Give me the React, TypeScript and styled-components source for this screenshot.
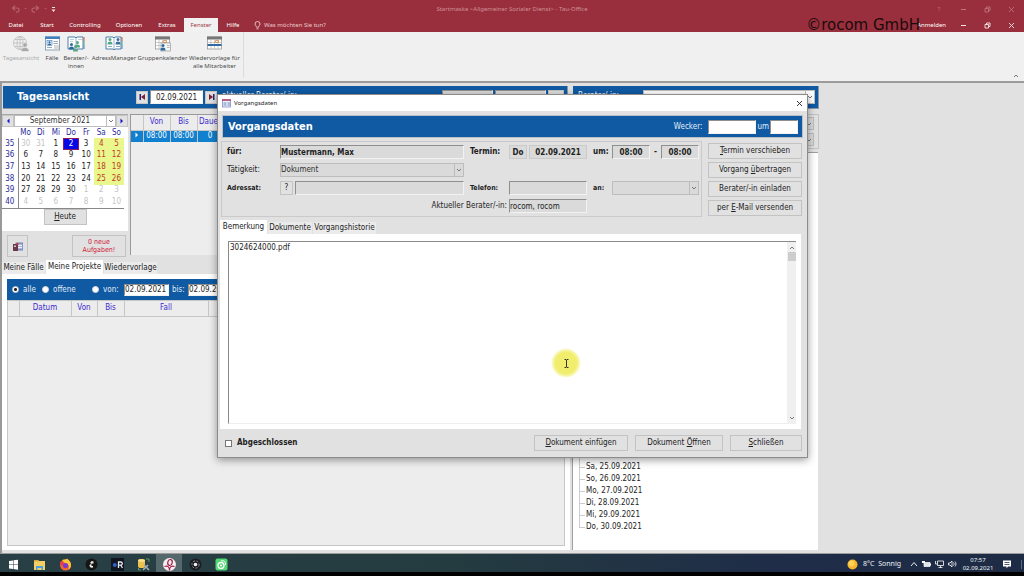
import React from "react";
import styled, { createGlobalStyle, css } from "styled-components";

const tahoma = `"DejaVu Sans Condensed", "DejaVu Sans", "Noto Sans", sans-serif`;
const segoe = `"Noto Sans", "Open Sans", sans-serif`;
const blue = "#0f5aa3";
const face = "#e1e1e1";

const GlobalStyle = createGlobalStyle`
  *, *::before, *::after { box-sizing: border-box; }
  body { margin: 0; background: #000; font-family: ${tahoma}; font-size: 8px; line-height: 10px; color: #222; }
  button, input, select, textarea { font: inherit; color: inherit; margin: 0; padding: 0; border-radius: 0; }
  u { text-underline-offset: 1px; }
`;

const Screen = styled.div`
  display: flex;
  flex-direction: column;
  min-height: 100vh;
  padding-bottom: 4px;
`;

/* ---------- title bar and ribbon ---------- */

const TopBar = styled.header`
  position: relative;
  background: #992f3c;
  font-family: ${segoe};
  font-size: 6px;
  line-height: 8px;
  color: #fff;
`;

const TitleRow = styled.div`
  display: grid;
  grid-template-columns: 1fr auto 1fr;
  align-items: center;
  height: 18px;
  color: #cf8f97;
`;

const QuickAccess = styled.div`
  display: flex;
  align-items: center;
  gap: 4px;
  padding-left: 11px;
`;

const WindowButtons = styled.div<{ $dim?: boolean }>`
  display: flex;
  justify-content: flex-end;
  align-items: center;
  padding-right: 1px;
  color: ${(p) => (p.$dim ? "#c0737d" : "#f6e6e8")};
`;

const IconButton = styled.button`
  display: flex;
  align-items: center;
  justify-content: center;
  width: 24px;
  height: 12px;
  border: 0;
  background: none;
`;

const TabRow = styled.div`
  display: flex;
  align-items: stretch;
  height: 14px;
`;

const MenuTab = styled.button<{ $w: number; $active?: boolean }>`
  width: ${(p) => p.$w}px;
  border: 0;
  white-space: nowrap;
  background: ${(p) => (p.$active ? "#f1f1f1" : "none")};
  color: ${(p) => (p.$active ? "#a23a47" : "#fff")};
`;

const TellMe = styled.button`
  display: flex;
  align-items: center;
  gap: 3px;
  padding-left: 6px;
  border: 0;
  background: none;
  color: #ecc9cd;
`;

const Account = styled.button`
  margin: 0 5px 0 auto;
  border: 0;
  background: none;
`;

const Watermark = styled.div`
  position: absolute;
  right: 104px;
  top: 15px;
  font: 15px/20px "DejaVu Sans", sans-serif;
  color: #1a0a0c;
`;

const Ribbon = styled.nav`
  display: flex;
  position: relative;
  height: 49px;
  background: #f0f0f0;
  font-family: ${segoe};
  font-size: 6px;
  line-height: 8px;
`;

const RibbonGroup = styled.div`
  display: flex;
  height: 46px;
  padding: 3px 1px 0 0;
  border-right: 1px solid #dcdcdc;
`;

const RibbonItem = styled.button<{ $w: number; $off?: boolean }>`
  display: flex;
  flex-direction: column;
  align-items: center;
  gap: 2px;
  width: ${(p) => p.$w}px;
  border: 0;
  background: none;
  white-space: nowrap;
  color: ${(p) => (p.$off ? "#aaa" : "#4c4c4c")};
  svg { flex: none; }
`;

const Collapse = styled.button`
  margin: auto 5px 3px auto;
  border: 0;
  background: none;
  display: flex;
`;

/* ---------- workspace ---------- */

const Workspace = styled.main`
  position: relative;
  flex: 1;
  display: grid;
  grid-template-columns: 570fr 249fr 205fr;
  background: ${face};
  border-top: 2px solid #9b9b9b;
  border-bottom: 1px solid #9b9b9b;
`;

const Pane = styled.section`
  display: flex;
  flex-direction: column;
  min-width: 0;
`;

const LeftPane = styled(Pane)`
  border-left: 2px solid #999;
`;

const RightPane = styled(Pane)`
  padding-left: 2px;
`;

const HeaderBar = styled.div`
  display: flex;
  align-items: center;
  height: 23px;
  margin: 3px 0 0 1px;
  background: ${blue};
  color: #fff;
  border-right: 1px solid #8a97a5;
  border-bottom: 1px solid #8a97a5;
`;

const LeftHeader = styled(HeaderBar)`
  margin-right: 2px;
`;

const PaneTitle = styled.h1`
  margin: 0;
  width: 133px;
  padding-left: 14px;
  font-size: 11px;
  line-height: 14px;
`;

const HeaderLabel = styled.span`
  padding: 0 0 2px 5px;
`;

const HeaderTools = styled.div`
  display: flex;
  gap: 2px;
  margin-left: auto;
  padding-right: 3px;
`;

const NavButton = styled.button`
  display: flex;
  align-items: center;
  justify-content: center;
  width: 12px;
  height: 13px;
  border: 1px solid #c5c5c5;
  background: ${face};
`;

const Field = styled.input<{ $w?: string; $bold?: boolean; $center?: boolean; $white?: boolean; $flat?: boolean }>`
  width: ${(p) => p.$w ?? "100%"};
  height: 14px;
  min-width: 0;
  padding: 0;
  border: 1px solid;
  border-color: ${(p) => (p.$flat ? "#cacaca" : "#8f8f8f #f2f2f2 #f2f2f2 #8f8f8f")};
  background: ${(p) => (p.$white ? "#fff" : "#d9dad9")};
  font-weight: ${(p) => (p.$bold ? 700 : 400)};
  text-align: ${(p) => (p.$center ? "center" : "left")};
  color: #222;
  outline: 0;
`;

const SelectWrap = styled.span<{ $w?: string; $white?: boolean }>`
  display: grid;
  grid-template-columns: 1fr 9px;
  align-items: stretch;
  width: ${(p) => p.$w ?? "100%"};
  height: 14px;
  border: 1px solid #bdbdbd;
  background: ${(p) => (p.$white ? "#fff" : "#d9dad9")};
  &::after { content: ""; grid-area: 1 / 2; border-left: 1px solid #bdbdbd; pointer-events: none; }
  select { grid-area: 1 / 1 / 2 / 3; appearance: none; border: 0; background: none; outline: 0; min-width: 0; color: #333; }
  svg { grid-area: 1 / 2; margin: auto; pointer-events: none; }
`;

const UpperArea = styled.div`
  display: grid;
  grid-template-columns: 128px 1fr;
  height: 146px;
  margin-top: 5px;
`;

const Calendar = styled.div`
  height: 117px;
  background: #fff;
  display: flex;
  flex-direction: column;
  border-top: 1px solid #a9a9a9;
  width: 126px;
`;

const MonthBar = styled.div`
  display: grid;
  grid-template-columns: 12px 1fr 12px;
  height: 12px;
  button { height: 12px; width: 12px; }
  span { height: 12px; }
  select { text-align: center; text-align-last: center; padding-right: 10px; }
`;

const Month = styled.table`
  width: 122px;
  height: 81px;
  margin-top: 1px;
  border-collapse: collapse;
  table-layout: fixed;
  text-align: center;
  border-bottom: 1px solid #888;
  th, td { padding: 0; line-height: 10px; font-weight: 400; }
  th { color: #2a2a9c; }
  thead th { border: 0; }
  tbody th { border-right: 1px solid #888; }
  th:first-child { width: 16px; }
`;

const Day = styled.td<{ $kind: string }>`
  ${(p) => p.$kind === "off" && css`color: #c4c4c4;`}
  ${(p) => p.$kind === "weekend" && css`background: #e9f78d; color: #c0392b;`}
  ${(p) => p.$kind === "today" && css`background: #0808e6; color: #fff; outline: 1px solid #8c1d5a; outline-offset: -1px;`}
`;

const PushButton = styled.button<{ $w?: string; $h?: number; $red?: boolean }>`
  display: flex;
  align-items: center;
  justify-content: center;
  width: ${(p) => p.$w ?? "100%"};
  height: ${(p) => p.$h ?? 16}px;
  border: 1px solid #c3c3c3;
  background: ${face};
  white-space: nowrap;
  color: ${(p) => (p.$red ? "#cf2039" : "#222")};
`;

const TodayRow = styled.div`
  display: flex;
  justify-content: center;
`;

const TaskRow = styled.div`
  display: flex;
  justify-content: space-between;
  padding: 4px 4px 0 5px;
  line-height: 8px;
  font-size: 7px;
`;

const Grid = styled.table`
  border-collapse: collapse;
  table-layout: fixed;
  width: 100%;
  text-align: center;
  th, td { padding: 0; white-space: nowrap; overflow: hidden; border-right: 1px solid #c6c6c6; }
  th { height: 15px; font-weight: 400; color: #3b2bcf; background: #ececec; border-bottom: 1px solid #c6c6c6; }
`;

const DayList = styled.div`
  height: 141px;
  border-left: 1px solid #999;
  border-top: 1px solid #999;
  background: #ededed;
  margin-right: 3px;
  td { height: 12px; background: #1181cf; color: #fff; }
`;

const Tabs = styled.div`
  display: flex;
  align-items: flex-end;
  height: 14px;
`;

const Tab = styled.button<{ $w: number; $active?: boolean }>`
  width: ${(p) => p.$w}px;
  height: ${(p) => (p.$active ? 14 : 12)}px;
  border: 0;
  border-right: 1px solid ${face};
  white-space: nowrap;
  background: ${(p) => (p.$active ? "#fff" : "#ebebeb")};
`;

const TabPage = styled.div`
  flex: 1;
  display: flex;
  flex-direction: column;
  margin-bottom: 3px;
  padding: 5px 5px 4px 5px;
  background: #fff;
`;

const FilterBar = styled.div`
  display: flex;
  align-items: center;
  height: 21px;
  padding-left: 5px;
  background: ${blue};
  color: #e4edf6;
`;

const RadioLabel = styled.label<{ $w: number }>`
  display: flex;
  align-items: center;
  gap: 4px;
  width: ${(p) => p.$w}px;
  input {
    appearance: none;
    width: 7px;
    height: 7px;
    border-radius: 50%;
    background: #fff;
    border: 1px solid #d8d8d8;
  }
  input:checked { background: radial-gradient(#222 0 1px, #fff 2px); }
`;

const FilterField = styled(Field)`
  height: 12px;
`;

const BisLabel = styled.label`
  width: 19px;
  padding-left: 3px;
`;

const ProjectList = styled.div`
  flex: 1;
  background: #ededed;
  border: 1px solid #c6c6c6;
`;

const FilterBox = styled.div`
  display: flex;
  flex-direction: column;
  gap: 3px;
  align-items: flex-end;
  height: 35px;
  margin: 5px 0 3px 0;
  padding: 2px 4px;
  border: 1px solid #c3c3c3;
`;

const Tree = styled.ul`
  flex: 1;
  display: flex;
  flex-direction: column;
  justify-content: flex-end;
  margin: 0 1px 3px 0;
  padding: 0 0 17px 6px;
  list-style: none;
  background: #fff;
  border-left: 1px solid #a0a0a0;
  border-top: 1px solid #a0a0a0;
`;

const TreeItem = styled.li`
  display: flex;
  line-height: 12px;
  border-left: 1px solid #ccc;
  &::before {
    content: "";
    width: 5px;
    height: 7px;
    margin-right: 1px;
    border-bottom: 1px solid #ccc;
  }
  &:last-child { border-left-color: transparent; }
  &:last-child::before { margin-left: -1px; width: 6px; border-left: 1px solid #ccc; }
`;

/* ---------- dialog ---------- */

const Dialog = styled.section`
  position: absolute;
  left: 217px;
  right: 216px;
  top: 11px;
  bottom: 95px;
  display: flex;
  flex-direction: column;
  background: ${face};
  border: 1px solid #8c8c8c;
  box-shadow: 0 2px 8px rgba(0, 0, 0, 0.4);
`;

const DialogTitle = styled.div`
  display: flex;
  align-items: center;
  gap: 3px;
  height: 16px;
  padding: 0 4px;
  background: #fff;
  font-family: ${segoe};
  font-size: 6px;
  line-height: 8px;
  button { margin-left: auto; width: 8px; }
`;

const DialogHeader = styled.div`
  display: flex;
  align-items: center;
  height: 23px;
  margin: 4px 4px 0 4px;
  padding: 0 4px 0 5px;
  background: ${blue};
  border: 1px solid #b8bfc6;
  color: #e4edf6;
  h2 { margin: 0 auto 0 0; font-size: 11px; line-height: 14px; color: #fff; }
  label { padding-right: 6px; }
  label + input + label { padding: 0 1px; }
`;

const DialogMain = styled.div`
  display: grid;
  grid-template-columns: 1fr 94px;
  gap: 6px;
  margin: 3px 5px 0 3px;
`;

const Group = styled.div`
  display: grid;
  grid-template-columns: 53px 1fr 45px 190px;
  grid-auto-rows: 14px;
  row-gap: 4px;
  align-items: center;
  height: 76px;
  padding: 3px 2px 0 5px;
  border: 1px solid #cacaca;
`;

const Label = styled.label<{ $bold?: boolean; $small?: boolean }>`
  font-weight: ${(p) => (p.$bold ? 700 : 400)};
  font-size: ${(p) => (p.$small ? 7 : 8)}px;
  white-space: nowrap;
`;

const RightLabel = styled(Label)`
  grid-column: 1 / 4;
  text-align: right;
  padding-right: 2px;
`;

const MidLabel = styled(Label)`
  padding-left: 6px;
`;

const Cell = styled.div`
  display: grid;
  grid-template-columns: 78px 25px 87px;
  align-items: center;
`;

const Inline = styled.div`
  display: flex;
  align-items: center;
  justify-content: space-between;
  gap: 2px;
`;

const Actions = styled.div`
  display: flex;
  flex-direction: column;
  gap: 3px;
  padding-top: 2px;
`;

const DialogTabs = styled(Tabs)`
  margin: 3px 0 0 2px;
`;

const NotePage = styled.div`
  flex: 1;
  display: flex;
  margin: 0 6px 0 2px;
  padding: 7px 5px 5px 8px;
  background: #fff;
`;

const Note = styled.textarea`
  flex: 1;
  resize: none;
  border: 0;
  border-left: 1px solid #8a8a8a;
  border-top: 1px solid #8a8a8a;
  border-bottom: 1px solid #eee;
  padding: 1px 0 0 1px;
  outline: 0;
  overflow: hidden;
`;

const ScrollBar = styled.div`
  display: flex;
  flex-direction: column;
  align-items: center;
  width: 9px;
  padding: 4px 0;
  background: #f0f0f0;
  border-top: 1px solid #8a8a8a;
  i { width: 8px; height: 9px; margin: 2px 0 auto; background: #cdcdcd; }
`;

const DialogFooter = styled.div`
  display: flex;
  align-items: center;
  gap: 7px;
  height: 28px;
  padding: 0 5px 0 7px;
`;

const Check = styled.label`
  display: flex;
  align-items: center;
  gap: 5px;
  margin-right: auto;
  font-weight: 700;
  input { appearance: none; width: 7px; height: 7px; border: 1px solid #777; background: #fff; }
`;

const Spotlight = styled.div`
  position: absolute;
  left: 333px;
  top: 253px;
  display: flex;
  align-items: center;
  justify-content: center;
  width: 30px;
  height: 30px;
  border-radius: 50%;
  background: radial-gradient(#f0ee6c 0 50%, #f7f6b0 62%, rgba(250, 250, 200, 0) 71%);
  pointer-events: none;
`;

/* ---------- taskbar ---------- */

const Taskbar = styled.footer`
  display: flex;
  align-items: stretch;
  height: 18px;
  background: linear-gradient(90deg, #283f45, #243b40 45%, #1f2d48 75%, #1d2b45);
  font-family: ${segoe};
  font-size: 7px;
  line-height: 10px;
  color: #eef2f5;
`;

const TaskIcon = styled.button<{ $active?: boolean }>`
  display: flex;
  align-items: center;
  justify-content: center;
  width: 26px;
  padding-top: 3px;
  border: 0;
  background: ${(p) => (p.$active ? "#55686b" : "none")};
`;

const Tray = styled.div`
  display: flex;
  align-items: center;
  gap: 4px;
  margin-left: auto;
  padding: 2px 2px 0 0;
`;

const Weather = styled.span`
  display: flex;
  align-items: center;
  gap: 5px;
  margin-right: 5px;
  white-space: pre;
`;

const Clock = styled.time`
  width: 32px;
  margin-left: 1px;
  font-size: 6px;
  line-height: 8px;
  text-align: center;
`;

const TrayEnd = styled.span`
  display: flex;
  padding: 0 9px 0 4px;
  border-right: 1px solid #5a6a80;
`;

/* ---------- drawings ---------- */

const Chevron = ({ up }: { up?: boolean }) => (
  <svg width="6" height="4" viewBox="0 0 6 4" fill="none" stroke="#777" strokeWidth="1">
    <path d={up ? "M1 3l2-2 2 2" : "M1 1l2 2 2-2"} />
  </svg>
);

const Undo = ({ flip }: { flip?: boolean }) => (
  <svg width="9" height="8" viewBox="0 0 9 8" fill="none" stroke="#b8616c" strokeWidth="1.2">
    <g transform={flip ? "translate(9 0) scale(-1 1)" : undefined}>
      <path d="M4 .8L1.5 3 4 5.2M1.5 3H6a2 2 0 0 1 0 4.200H5" />
    </g>
  </svg>
);

const Caret = () => (
  <svg width="3" height="2" viewBox="0 0 4 3" fill="#b8616c"><path d="M0 0h4L2 2z" /></svg>
);

const Minimize = () => (
  <svg width="7" height="7" viewBox="0 0 7 7" stroke="currentColor"><path d="M1 3.500h5" /></svg>
);
const Restore = () => (
  <svg width="7" height="7" viewBox="0 0 7 7" fill="none" stroke="currentColor" strokeWidth=".9">
    <path d="M1 2.500h3.500V6H1zM2.500 2.500V1H6v3.500H4.500" />
  </svg>
);
const Cross = () => (
  <svg width="7" height="7" viewBox="0 0 7 7" stroke="currentColor" strokeWidth=".9"><path d="M1 1l5 5M6 1L1 6" /></svg>
);

const Bulb = () => (
  <svg width="7" height="9" viewBox="0 0 7 9" fill="none" stroke="#ecc9cd" strokeWidth=".9">
    <path d="M2.500 6.200C2.500 5 1 4.600 1 3a2.500 2.500 0 0 1 5 0c0 1.600-1.500 2-1.500 3.200zM2.500 7.800h2" />
  </svg>
);

const Person = ({ x, y, c }: { x: number; y: number; c: string }) => (
  <g transform={`translate(${x} ${y})`} fill={c}>
    <circle cx="2.500" cy="1.600" r="1.500" />
    <path d="M0 6.500C0 4 1 3.400 2.500 3.400S5 4 5 6.500z" />
  </g>
);

const Globe = () => (
  <svg width="18" height="17" viewBox="0 0 18 17" fill="none" stroke="#bdbdbd" strokeWidth=".8">
    <circle cx="8" cy="8" r="6.500" />
    <ellipse cx="8" cy="8" rx="3" ry="6.500" />
    <path d="M1.500 8h13M2.500 4.500h11M2.500 11.500h11M8 1.500v13" />
    <g fill="#a9a9a9" stroke="#f0f0f0" strokeWidth=".6">
      <circle cx="13" cy="10" r="2.300" />
      <path d="M9 16.500c0-3 1.500-4 4-4s4 1 4 4z" />
    </g>
  </svg>
);

const CaseIcon = () => (
  <svg width="17" height="17" viewBox="0 0 17 17">
    <rect x="1.500" y="2" width="14" height="13" fill="#fff" stroke="#8ea2b5" />
    <rect x="1" y="1.500" width="15" height="2.500" fill="#3f7fbd" />
    <rect x="3" y="5.500" width="5" height="5" fill="#dce9f5" stroke="#3f7fbd" strokeWidth=".6" />
    <circle cx="5.500" cy="7.200" r="1" fill="#2b6199" />
    <path d="M4 10c0-2 3-2 3 0z" fill="#2b6199" />
    <path d="M9.500 6.500h4.500M9.500 8.500h4.500M3 12.500h5" stroke="#9ab" />
    <path d="M10 10h5v4h-5z" fill="#d9d9d9" />
  </svg>
);

const BookIcon = ({ team }: { team?: boolean }) => (
  <svg width="18" height="17" viewBox="0 0 18 17">
    <path d="M1 2h7l1 1 1-1h6v12h-6l-1 1-1-1H1z" fill="#fff" stroke="#4b7fa8" strokeWidth="1" />
    <path d="M9 3v11" stroke="#9ab7cc" />
    <path d="M17 2v4" stroke="#d0593f" />
    <path d="M17 6v4" stroke="#4fa37c" />
    <path d="M17 10v4" stroke="#4a86c0" />
    {team ? (
      <>
        <path d="M3 4.500h4M3 6.500h3M11 4.500h4" stroke="#9ab7cc" strokeWidth=".7" />
        <Person x={8} y={6} c="#58a883" />
        <Person x={2} y={8} c="#2f6aa3" />
        <Person x={6} y={10} c="#58a883" />
      </>
    ) : (
      <>
        <Person x={2.5} y={3} c="#58a883" />
        <Person x={10.5} y={3} c="#3d6f9f" />
        <path d="M3 11.500h4M11 11.500h4" stroke="#7bb0cf" />
      </>
    )}
  </svg>
);

const CalendarIcon = ({ group }: { group?: boolean }) => (
  <svg width="17" height="17" viewBox="0 0 17 17">
    <rect x="1.500" y="2" width="14" height="12" fill="#fff" stroke="#999" strokeWidth=".8" />
    <rect x="1" y="1.500" width="15" height="3" fill="#777" />
    <path d="M1.500 7.500h14M1.500 10.500h14M5 4v10M8.500 4v10M12 4v10" stroke="#b5b5b5" strokeWidth=".7" />
    <path d="M9.500 5.500h3v2h-3z" fill="none" stroke="#e08b4a" strokeWidth=".8" />
    {group ? (
      <>
        <rect x="7" y="8" width="9.500" height="8" fill="#f7f7f7" stroke="#999" strokeWidth=".7" />
        <Person x={6.5} y={9} c="#2f6aa3" />
        <path d="M13 10.500h2.500M13 12.500h2.500" stroke="#999" strokeWidth=".7" />
      </>
    ) : (
      <path d="M1.500 9h14v2h-14z" fill="#2f6aa3" />
    )}
  </svg>
);

const FormIcon = () => (
  <svg width="9" height="9" viewBox="0 0 9 9">
    <rect x=".5" y="1" width="8" height="7" fill="#eef2fb" stroke="#7d8cc0" strokeWidth=".8" />
    <path d="M0 1h9" stroke="#b5486d" strokeWidth="1.600" />
    <path d="M1.500 4h3M1.500 6h3M5.500 4H8M5.500 6H8" stroke="#5d79b8" strokeWidth=".9" />
  </svg>
);

const TaskFormIcon = () => (
  <svg width="10" height="9" viewBox="0 0 10 9">
    <rect x="3" y="1" width="7" height="7" fill="#a9b7dc" stroke="#5b6a9e" strokeWidth=".8" />
    <path d="M4 3.500h5M4 5.500h5" stroke="#fff" strokeWidth=".8" />
    <rect x="0" y="2" width="5" height="7" fill="#6a3a4a" />
    <path d="M1 3.500h2v1.500H1z" fill="#d9c3ca" />
    <path d="M3.500 1h2v2h-2z" fill="#c23a4c" />
  </svg>
);

const Step = ({ next }: { next?: boolean }) => (
  <svg width="7" height="6" viewBox="0 0 7 6">
    <g transform={next ? "translate(7 0) scale(-1 1)" : undefined}>
      <path d="M0.500 0h1.500v6H.5z" fill="#23237a" />
      <path d="M6 0v6L2 3z" fill="#7d1f33" />
    </g>
  </svg>
);

const Arrow = ({ right, c = "#1414c8" }: { right?: boolean; c?: string }) => (
  <svg width="4" height="6" viewBox="0 0 4 6" fill={c}><path d={right ? "M0.500 .5v5l2.500-2.500z" : "M3.500 .5v5L1 3z"} /></svg>
);

const taskIcons: { name: string; art: React.ReactNode }[] = [
  { name: "Start", art: <g fill="#fff"><path d="M2 3l4-.6v4H2zM6.500 2.300L11 1.700v4.700H6.500zM2 7h4v4l-4-.6zM6.500 7H11v4.700l-4.500-.6z" /></g> },
  { name: "Explorer", art: <><path d="M1 2h4l1 1h6v9H1z" fill="#f3cf63" /><path d="M1 2h4l1 1.500H1z" fill="#dba637" /><path d="M3 12V8h7v4H8.500v-2h-4v2z" fill="#4b9fe0" /></> },
  { name: "Firefox", art: <><circle cx="6.500" cy="7" r="5.500" fill="#f2662b" /><path d="M3 2c3-1 4 0 5-1.500C10 2 12 4 12 7c0 2-1 4-3 5 2-3 1-6-3-7z" fill="#fcc43b" /><circle cx="6.500" cy="7.500" r="2.600" fill="#7a3bd0" /><path d="M1 4c1-1 4 0 4 2L2 8z" fill="#e53a53" /></> },
  { name: "Audio", art: <><circle cx="6.500" cy="6.500" r="6" fill="#151515" /><path d="M8.500 3.500c-3-1-4 1.500-2 2.500-3 0-2.500 4.500 1.500 3.500V8H6.500V5.500h2z" fill="#eee" /></> },
  { name: "Rocom", art: <><rect width="13" height="13" fill="#10151f" /><circle cx="3.800" cy="7" r="2" fill="#2f62c9" /><path d="M7.500 10V4h2.200a1.600 1.600 0 0 1 0 3.200H7.500M9.500 7l2 3" stroke="#e4e8ef" strokeWidth="1.300" fill="none" /></> },
  { name: "Datenbank", art: <><path d="M1 2.500c0-2 7-2 7 0v6c0 2-7 2-7 0z" fill="#ecc14c" /><ellipse cx="4.500" cy="2.500" rx="3.500" ry="1.300" fill="#f9e08e" /><path d="M9 1h3v3M4 12H1.500V10" stroke="#59a05b" fill="none" /><path d="M6 12l5-5M7 7l5 5" stroke="#a5adb0" strokeWidth="1.600" /></> },
  { name: "Tau-Office", art: <><circle cx="6.500" cy="6.500" r="6.500" fill="#f6edf0" /><ellipse cx="7" cy="4.500" rx="2.200" ry="3" fill="none" stroke="#a3204a" strokeWidth="1.200" transform="rotate(15 7 4.500)" /><path d="M1.500 8.500c3-1 5 0 5 4M11.500 8.500c-3-1-5 0-5 4" stroke="#a3204a" strokeWidth="1.200" fill="none" /></> },
  { name: "Kamera", art: <><circle cx="6.500" cy="6.500" r="6" fill="#1c1d22" /><circle cx="6.500" cy="6.500" r="3.600" fill="none" stroke="#8b93a3" strokeDasharray="2 1.500" /><circle cx="6.500" cy="6.500" r="1.800" fill="#f2f2f2" /></> },
  { name: "Camtasia", art: <><rect x=".5" y=".5" width="12" height="12" rx="2" fill="#52d873" /><circle cx="6" cy="7.500" r="3" fill="none" stroke="#fff" strokeWidth="1.300" /><circle cx="6" cy="7.500" r="1" fill="#fff" /><path d="M6 3c3-1 5 1 4.500 4" stroke="#fff" fill="none" /></> },
];

/* ---------- data ---------- */

const weeks: [number, number[]][] = [
  [35, [30, 31, 1, 2, 3, 4, 5]],
  [36, [6, 7, 8, 9, 10, 11, 12]],
  [37, [13, 14, 15, 16, 17, 18, 19]],
  [38, [20, 21, 22, 23, 24, 25, 26]],
  [39, [27, 28, 29, 30, 1, 2, 3]],
  [40, [4, 5, 6, 7, 8, 9, 10]],
];

const dayKind = (row: number, col: number, day: number) => {
  if ((row === 0 && day > 20) || (row > 3 && day < 20)) return "off";
  if (row === 0 && day === 2) return "today";
  return col > 4 ? "weekend" : "day";
};

const treeDays = ["Fr, 24.09.2021", "Sa, 25.09.2021", "So, 26.09.2021", "Mo, 27.09.2021", "Di, 28.09.2021", "Mi, 29.09.2021", "Do, 30.09.2021"];

const menu: [string, number][] = [["Datei", 32], ["Start", 30], ["Controlling", 46], ["Optionen", 42], ["Extras", 34], ["Fenster", 34], ["Hilfe", 30]];

/* ---------- composed parts ---------- */

const Select = ({ label, value, w, white }: { label: string; value?: string; w?: string; white?: boolean }) => (
  <SelectWrap $w={w} $white={white}>
    <select aria-label={label}><option>{value ?? ""}</option></select>
    <Chevron />
  </SelectWrap>
);

const WindowControls = () => (
  <>
    <IconButton aria-label="Minimieren"><Minimize /></IconButton>
    <IconButton aria-label="Wiederherstellen"><Restore /></IconButton>
    <IconButton aria-label="Schließen"><Cross /></IconButton>
  </>
);

function VorgangDialog() {
  return (
    <Dialog role="dialog" aria-label="Vorgangsdaten">
      <DialogTitle>
        <FormIcon />
        Vorgangsdaten
        <IconButton aria-label="Dialog schließen"><Cross /></IconButton>
      </DialogTitle>
      <DialogHeader>
        <h2>Vorgangsdaten</h2>
        <label htmlFor="wecker">Wecker:</label>
        <Field id="wecker" $w="48px" $white />
        <label htmlFor="weckerUm">um</label>
        <Field id="weckerUm" $w="28px" $white />
      </DialogHeader>
      <DialogMain>
        <Group>
          <Label $bold htmlFor="fuer">für:</Label>
          <Field id="fuer" $bold readOnly defaultValue="Mustermann, Max" />
          <MidLabel $bold htmlFor="datum">Termin:</MidLabel>
          <Cell>
            <Inline>
              <Field aria-label="Wochentag" $w="18px" $bold $center $flat readOnly defaultValue="Do" />
              <Field id="datum" $w="58px" $bold $center $flat readOnly defaultValue="02.09.2021" />
            </Inline>
            <MidLabel $bold htmlFor="vonZeit">um:</MidLabel>
            <Inline>
              <Field id="vonZeit" $w="38px" $bold $center readOnly defaultValue="08:00" />
              <b>-</b>
              <Field aria-label="Ende" $w="38px" $bold $center readOnly defaultValue="08:00" />
            </Inline>
          </Cell>
          <Label as="span">Tätigkeit:</Label>
          <Select label="Tätigkeit" value="Dokument" />
          <span />
          <span />
          <Label $bold $small htmlFor="adressat">Adressat:</Label>
          <Inline>
            <PushButton $w="13px" $h={14} aria-label="Adressat suchen">?</PushButton>
            <Field id="adressat" $w="calc(100% - 15px)" readOnly />
          </Inline>
          <MidLabel $bold $small htmlFor="telefon">Telefon:</MidLabel>
          <Cell>
            <Field id="telefon" readOnly />
            <MidLabel as="span" $bold $small>an:</MidLabel>
            <Select label="an" />
          </Cell>
          <RightLabel htmlFor="berater">Aktueller Berater/-in:</RightLabel>
          <Cell><Field id="berater" readOnly defaultValue="rocom, rocom" /></Cell>
        </Group>
        <Actions>
          <PushButton><span><u>T</u>ermin verschieben</span></PushButton>
          <PushButton><span>Vorgang <u>ü</u>bertragen</span></PushButton>
          <PushButton><span>Berater/-in einladen</span></PushButton>
          <PushButton><span>per <u>E</u>-Mail versenden</span></PushButton>
        </Actions>
      </DialogMain>
      <DialogTabs>
        <Tab $w={48} $active>Bemerkung</Tab>
        <Tab $w={45}>Dokumente</Tab>
        <Tab $w={64}>Vorgangshistorie</Tab>
      </DialogTabs>
      <NotePage>
        <Note aria-label="Bemerkung" defaultValue="3024624000.pdf" />
        <ScrollBar><Chevron up /><i /><Chevron /></ScrollBar>
      </NotePage>
      <DialogFooter>
        <Check><input type="checkbox" />Abgeschlossen</Check>
        <PushButton $w="94px"><span><u>D</u>okument einfügen</span></PushButton>
        <PushButton $w="88px"><span>Dokument <u>Ö</u>ffnen</span></PushButton>
        <PushButton $w="72px"><span><u>S</u>chließen</span></PushButton>
      </DialogFooter>
      <Spotlight>
        <svg width="5" height="9" viewBox="0 0 5 9" fill="none" stroke="#222" strokeWidth=".9">
          <path d="M.5.500h1.500l.5.500.5-.5h1.500M2.500 1v7M.5 8.500h1.500l.5-.5.5.5h1.500" />
        </svg>
      </Spotlight>
    </Dialog>
  );
}

export default function App() {
  return (
    <Screen>
      <GlobalStyle />
      <TopBar>
        <TitleRow>
          <QuickAccess>
            <Undo /><Caret /><Undo flip /><Caret />
            <svg width="5" height="7" viewBox="0 0 5 7" fill="#f4dfe2"><path d="M1 1h3v1H1zM0.500 3.500h4L2.500 6z" /></svg>
          </QuickAccess>
          <span>Startmaske &lt;Allgemeiner Sozialer Dienst&gt; - Tau-Office</span>
          <WindowButtons $dim>
            <IconButton aria-label="Hilfe">?</IconButton>
            <WindowControls />
          </WindowButtons>
        </TitleRow>
        <TabRow>
          {menu.map(([name, w]) => (
            <MenuTab key={name} $w={w} $active={name === "Fenster"}>{name}</MenuTab>
          ))}
          <TellMe><Bulb />Was möchten Sie tun?</TellMe>
          <Account>Anmelden</Account>
          <WindowButtons><WindowControls /></WindowButtons>
        </TabRow>
        <Watermark>©rocom GmbH</Watermark>
      </TopBar>
      <Ribbon>
        <RibbonGroup>
          <RibbonItem $w={42} $off><Globe />Tagesansicht</RibbonItem>
          <RibbonItem $w={20}><CaseIcon />Fälle</RibbonItem>
          <RibbonItem $w={28}><BookIcon team /><span>Berater/-<br />innen</span></RibbonItem>
          <RibbonItem $w={48}><BookIcon />AdressManager</RibbonItem>
          <RibbonItem $w={49}><CalendarIcon group />Gruppenkalender</RibbonItem>
          <RibbonItem $w={55}><CalendarIcon /><span>Wiedervorlage für<br />alle Mitarbeiter</span></RibbonItem>
        </RibbonGroup>
        <Collapse aria-label="Menüband reduzieren"><Chevron up /></Collapse>
      </Ribbon>
      <Workspace>
        <LeftPane>
          <LeftHeader>
            <PaneTitle>Tagesansicht</PaneTitle>
            <Inline>
              <NavButton aria-label="Vorheriger Tag"><Step /></NavButton>
              <Field aria-label="Datum" $w="53px" $white $center defaultValue="02.09.2021" />
              <NavButton aria-label="Nächster Tag"><Step next /></NavButton>
            </Inline>
            <HeaderLabel>aktueller Berater/-in:</HeaderLabel>
            <HeaderTools>
              <Field aria-label="Berater" $w="51px" readOnly />
              <Field aria-label="Team" $w="51px" readOnly />
              <PushButton $w="16px" $h={14} aria-label="Auswahl"><Chevron /></PushButton>
            </HeaderTools>
          </LeftHeader>
          <UpperArea>
            <div>
              <Calendar>
                <MonthBar>
                  <NavButton aria-label="Voriger Monat"><Arrow /></NavButton>
                  <Select label="Monat" value="September 2021" white />
                  <NavButton aria-label="Nächster Monat"><Arrow right /></NavButton>
                </MonthBar>
                <Month>
                  <thead>
                    <tr><th />{["Mo", "Di", "Mi", "Do", "Fr", "Sa", "So"].map((d) => <th key={d}>{d}</th>)}</tr>
                  </thead>
                  <tbody>
                    {weeks.map(([wk, days], r) => (
                      <tr key={wk}>
                        <th>{wk}</th>
                        {days.map((d, c) => <Day key={c} $kind={dayKind(r, c, d)}>{d}</Day>)}
                      </tr>
                    ))}
                  </tbody>
                </Month>
                <TodayRow><PushButton $w="43px"><span><u>H</u>eute</span></PushButton></TodayRow>
              </Calendar>
              <TaskRow>
                <PushButton $w="21px" $h={22} aria-label="Aufgabenformular"><TaskFormIcon /></PushButton>
                <PushButton $w="54px" $h={22} $red><span>0 neue<br />Aufgaben!</span></PushButton>
              </TaskRow>
            </div>
            <DayList>
              <Grid>
                <colgroup><col width="12" /><col width="27" /><col width="27" /><col width="26" /><col /></colgroup>
                <thead><tr><th /><th>Von</th><th>Bis</th><th>Dauer</th><th /></tr></thead>
                <tbody><tr><td><Arrow right c="#fff" /></td><td>08:00</td><td>08:00</td><td>0</td><td /></tr></tbody>
              </Grid>
            </DayList>
          </UpperArea>
          <Tabs>
            <Tab $w={44}>Meine Fälle</Tab>
            <Tab $w={58} $active>Meine Projekte</Tab>
            <Tab $w={54}>Wiedervorlage</Tab>
          </Tabs>
          <TabPage>
            <FilterBar>
              <RadioLabel $w={30}><input type="radio" name="f" defaultChecked />alle</RadioLabel>
              <RadioLabel $w={50}><input type="radio" name="f" />offene</RadioLabel>
              <RadioLabel $w={32}><input type="radio" name="f" />von:</RadioLabel>
              <FilterField aria-label="von Datum" $w="45px" $white defaultValue="02.09.2021" />
              <BisLabel htmlFor="bis">bis:</BisLabel>
              <FilterField id="bis" $w="45px" $white defaultValue="02.09.2021" />
            </FilterBar>
            <ProjectList>
              <Grid>
                <colgroup><col width="11" /><col width="52" /><col width="26" /><col width="27" /><col width="84" /><col /></colgroup>
                <thead><tr><th /><th>Datum</th><th>Von</th><th>Bis</th><th>Fall</th><th /></tr></thead>
              </Grid>
            </ProjectList>
          </TabPage>
        </LeftPane>
        <RightPane>
          <HeaderBar>
            <HeaderLabel>Berater/-in:</HeaderLabel>
            <HeaderTools><Select label="Berater/-in" w="172px" white /></HeaderTools>
          </HeaderBar>
          <FilterBox>
            <Select label="Filter 1" w="172px" />
            <Select label="Filter 2" w="172px" />
          </FilterBox>
          <Tree>{treeDays.map((d) => <TreeItem key={d}>{d}</TreeItem>)}</Tree>
        </RightPane>
        <VorgangDialog />
      </Workspace>
      <Taskbar>
        {taskIcons.map(({ name, art }) => (
          <TaskIcon key={name} aria-label={name} $active={name === "Tau-Office"}>
            <svg width="13" height="13" viewBox="0 0 13 13">{art}</svg>
          </TaskIcon>
        ))}
        <Tray>
          <Weather>
            <svg width="11" height="11" viewBox="0 0 11 11"><circle cx="5.500" cy="5.500" r="5" fill="#f9b52c" /><circle cx="4.500" cy="4.500" r="3" fill="#ffd257" /></svg>
            {"8°C  Sonnig"}
          </Weather>
          <svg width="8" height="6" viewBox="0 0 8 6" fill="none" stroke="#fff" strokeWidth=".9"><path d="M1 5l3-3.500L7 5" /></svg>
          <svg width="9" height="8" viewBox="0 0 9 8"><path d="M2 2.500h6v4H2z" fill="#dfe5ea" stroke="#fff" strokeWidth=".7" /><path d="M0 1h3v2H0z" fill="#fff" /><path d="M8 3.500h1v2H8z" fill="#fff" /></svg>
          <svg width="9" height="8" viewBox="0 0 9 8" fill="none" stroke="#fff" strokeWidth=".8"><path d="M2.500 1h6v4.500h-6zM5.500 5.500v2M3.500 7.500h4M.5 1v3h2" /></svg>
          <svg width="9" height="8" viewBox="0 0 9 8" fill="none" stroke="#fff" strokeWidth=".8"><path d="M.5 3h1.500l2-2v6L2 5H.5zM5.500 2.500c.8 1 .8 2 0 3M7 1.500c1.300 1.500 1.300 3.500 0 5" /></svg>
          <Clock>07:57<br />02.09.2021</Clock>
          <TrayEnd>
            <svg width="10" height="9" viewBox="0 0 10 9"><path d="M1 .5h8v6H6L4.500 8.500V6.500H1z" fill="#fff" /><path d="M2.500 2.500h5M2.500 4.500h5" stroke="#26354c" strokeWidth=".8" /></svg>
          </TrayEnd>
        </Tray>
      </Taskbar>
    </Screen>
  );
}
